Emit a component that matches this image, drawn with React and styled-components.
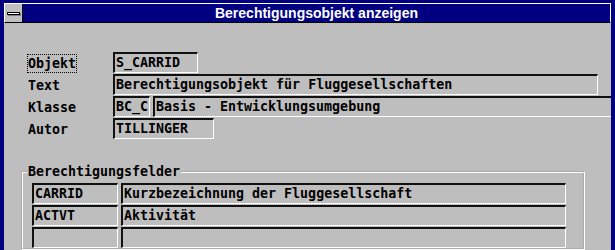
import React from "react";
import styled, { createGlobalStyle } from "styled-components";

const GlobalStyle = createGlobalStyle`
  html, body {
    margin: 0;
    padding: 0;
    background: #000080;
  }
  body {
    width: 615px;
    height: 250px;
    overflow: hidden;
  }
`;

const Window = styled.div`
  width: 615px;
  height: 250px;
  box-sizing: border-box;
  border: 4px solid #000080;
  border-top-width: 3px;
  border-bottom: none;
  display: flex;
  flex-direction: column;
  background-color: #c0c0c0;
  overflow: hidden;
`;

const TitleBar = styled.div`
  display: flex;
  height: 20px;
  box-sizing: border-box;
  border: 1px solid #fff;
  border-bottom-color: #000;
  background: #000080;
`;

const SysMenu = styled.div`
  width: 17px;
  border-right: 1px solid #000;
  background: #c0c0c0;
  display: flex;
  align-items: center;
  justify-content: center;
`;

const SysBar = styled.span`
  width: 11px;
  height: 1px;
  background: #fff;
  border: 1px solid #000;
  box-shadow: 1px 1px 0 #808080;
`;

const Title = styled.div`
  flex: 1;
  color: #fff;
  font-family: "Liberation Sans", Arial, sans-serif;
  font-size: 14px;
  font-weight: bold;
  line-height: 18px;
  text-align: center;
`;

const Body = styled.div`
  flex: 1;
  padding: 29px 0 0 17px;
  background-color: #c0c0c0;
  background-image: repeating-conic-gradient(#b9b9b9 0 25%, #c3c3c3 0 50%);
  background-size: 2px 2px;
  font-family: "DejaVu Sans Mono", "Liberation Mono", monospace;
  font-size: 13.3px;
  font-weight: bold;
  color: #000;
  overflow: hidden;
`;

const Form = styled.div`
  margin-left: 6px;
  display: grid;
  grid-template-columns: 86px 1fr;
  grid-auto-rows: 21px;
  row-gap: 1px;
`;

const Label = styled.div`
  display: flex;
  align-items: flex-end;
`;

const LabelText = styled.span`
  height: 17px;
  line-height: 17px;
  padding: 0 0 0 0;
  border: 1px ${(p) => (p.focused ? "dotted #000" : "solid transparent")};
`;

const FieldRow = styled.div`
  display: flex;
  gap: 3px;
`;

const Field = styled.div`
  box-sizing: border-box;
  flex: none;
  width: ${(p) => p.w}px;
  height: 21px;
  border-top: 2px solid #111;
  border-left: 2px solid #111;
  border-right: 1px solid #fff;
  border-bottom: 1px solid #fff;
  padding-left: 1px;
  line-height: 17px;
  white-space: pre;
  overflow: hidden;
`;

const Group = styled.fieldset`
  margin: 25px 0 0 0;
  width: 564px;
  box-sizing: border-box;
  border: 2px groove #fff;
  padding: 3px 0 0 9px;
`;

const Legend = styled.legend`
  margin-left: -5px;
  padding: 0 1px;
  line-height: 16px;
`;

const Table = styled.div`
  display: grid;
  grid-template-columns: 86px 445px;
  grid-auto-rows: 21px;
  column-gap: 3px;
  row-gap: 1px;
`;

const fields = [
  { label: "Objekt", focused: true, values: [{ w: 85, text: "S_CARRID" }] },
  { label: "Text", values: [{ w: 485, text: "Berechtigungsobjekt für Fluggesellschaften" }] },
  {
    label: "Klasse",
    values: [
      { w: 37, text: "BC_C" },
      { w: 470, text: "Basis - Entwicklungsumgebung" },
    ],
  },
  { label: "Autor", values: [{ w: 101, text: "TILLINGER" }] },
];

const rows = [
  ["CARRID", "Kurzbezeichnung der Fluggesellschaft"],
  ["ACTVT", "Aktivität"],
  ["", ""],
];

export default function App() {
  return (
    <>
      <GlobalStyle />
      <Window>
        <TitleBar>
          <SysMenu>
            <SysBar />
          </SysMenu>
          <Title>Berechtigungsobjekt anzeigen</Title>
        </TitleBar>
        <Body>
          <Form>
            {fields.map((f) => (
              <React.Fragment key={f.label}>
                <Label>
                  <LabelText focused={f.focused}>{f.label}</LabelText>
                </Label>
                <FieldRow>
                  {f.values.map((v, i) => (
                    <Field key={i} w={v.w}>{v.text}</Field>
                  ))}
                </FieldRow>
              </React.Fragment>
            ))}
          </Form>
          <Group>
            <Legend>Berechtigungsfelder</Legend>
            <Table>
              {rows.map((r, i) => (
                <React.Fragment key={i}>
                  <Field>{r[0]}</Field>
                  <Field>{r[1]}</Field>
                </React.Fragment>
              ))}
            </Table>
          </Group>
        </Body>
      </Window>
    </>
  );
}
